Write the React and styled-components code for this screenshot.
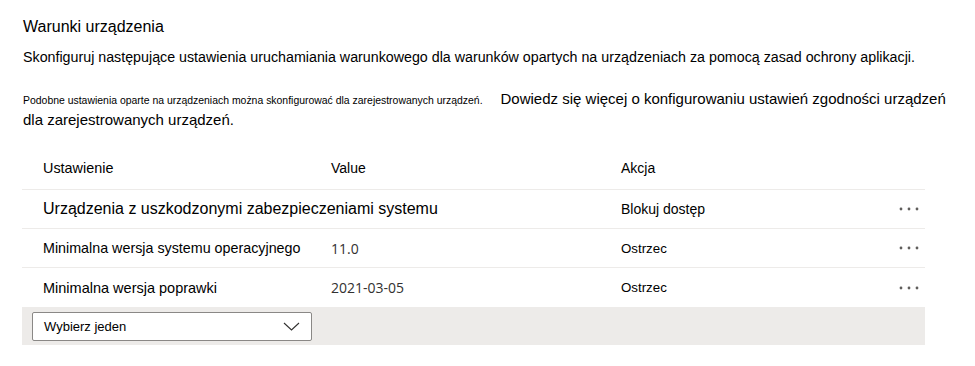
import React from 'react'
import styled, { createGlobalStyle } from 'styled-components'

const GlobalStyle = createGlobalStyle`
  html, body {
    margin: 0;
    padding: 0;
    background: #fff;
  }
  body {
    font-family: 'Liberation Sans', Arial, sans-serif;
    color: #000;
  }
`

const Page = styled.div`
  width: 975px;
  padding: 17px 0 0 23px;
  box-sizing: border-box;
`

const Title = styled.h2`
  margin: 0 0 10px;
  font-size: 16px;
  line-height: 20px;
  font-weight: 400;
  color: #000;
`

const Description = styled.p`
  margin: 0 0 21px;
  font-size: 14.25px;
  line-height: 20px;
`

const Note = styled.p`
  margin: 0;
  width: 935px;
  height: 42px;
  font-size: 15px;
  line-height: 21px;
`

const SmallText = styled.span`
  font-size: 10.45px;
  line-height: 1;
`

const LearnMore = styled.span`
  margin-left: 18px;
`

const Table = styled.div`
  margin: 16px 0 0 -1px;
  width: 903px;
`

const Row = styled.div`
  display: grid;
  grid-template-columns: 288px 290px 1fr 40px;
  align-items: center;
  box-sizing: border-box;
  height: ${p => p.$height || 39}px;
  padding-left: 21px;
  border-bottom: ${p => (p.$noBorder ? 'none' : '1px solid #edebe9')};
  font-size: 14px;
  color: #000;
`

const Cell = styled.div`
  white-space: nowrap;
  font-size: ${p => (p.$size ? `${p.$size}px` : 'inherit')};
`

const Value = styled.div`
  font-family: 'Open Sans', 'Noto Sans', sans-serif;
  font-size: 14px;
  color: #323130;
`

const MoreButton = styled.div`
  display: flex;
  justify-content: flex-end;
  padding-right: 6px;
  line-height: 0;
`

const Footer = styled.div`
  display: flex;
  align-items: center;
  height: 38px;
  padding-left: 10px;
  background: #edebe9;
`

const Dropdown = styled.div`
  display: flex;
  align-items: center;
  justify-content: space-between;
  box-sizing: border-box;
  width: 280px;
  height: 29px;
  padding: 0 11px 0 11px;
  background: #fff;
  border: 1px solid #8a8886;
  border-radius: 2px;
  font-size: 13px;
  color: #000;
`

const Dots = () => (
  <svg width="20" height="4" viewBox="0 0 20 4">
    {[2, 10, 18].map(x => (
      <circle key={x} cx={x} cy="2" r="1.4" fill="#605e5c" />
    ))}
  </svg>
)

const Chevron = () => (
  <svg width="17" height="9" viewBox="0 0 17 9">
    <path d="M1 1 L8.5 8 L16 1" fill="none" stroke="#323130" strokeWidth="1.1" />
  </svg>
)

const rows = [
  { name: 'Urządzenia z uszkodzonymi zabezpieczeniami systemu', value: '', action: 'Blokuj dostęp', size: 16, actionSize: 14 },
  { name: 'Minimalna wersja systemu operacyjnego', value: '11.0', action: 'Ostrzec', size: 14.3, actionSize: 13.3 },
  { name: 'Minimalna wersja poprawki', value: '2021-03-05', action: 'Ostrzec', size: 14.5, actionSize: 13.3 },
]

export default function App() {
  return (
    <>
      <GlobalStyle />
      <Page>
        <Title>Warunki urządzenia</Title>
        <Description>
          Skonfiguruj następujące ustawienia uruchamiania warunkowego dla warunków opartych na
          urządzeniach za pomocą zasad ochrony aplikacji.
        </Description>
        <Note>
          <SmallText>
            Podobne ustawienia oparte na urządzeniach można skonfigurować dla zarejestrowanych urządzeń.
          </SmallText>
          <LearnMore>
            Dowiedz się więcej o konfigurowaniu ustawień zgodności urządzeń dla zarejestrowanych urządzeń.
          </LearnMore>
        </Note>
        <Table>
          <Row $height={44}>
            <Cell $size={14.4}>Ustawienie</Cell>
            <Cell $size={14}>Value</Cell>
            <Cell $size={14}>Akcja</Cell>
            <div />
          </Row>
          {rows.map((r, i) => (
            <Row key={r.name} $noBorder={i === rows.length - 1}>
              <Cell $size={r.size}>{r.name}</Cell>
              <Value>{r.value}</Value>
              <Cell $size={r.actionSize}>{r.action}</Cell>
              <MoreButton>
                <Dots />
              </MoreButton>
            </Row>
          ))}
          <Footer>
            <Dropdown>
              <span>Wybierz jeden</span>
              <Chevron />
            </Dropdown>
          </Footer>
        </Table>
      </Page>
    </>
  )
}
